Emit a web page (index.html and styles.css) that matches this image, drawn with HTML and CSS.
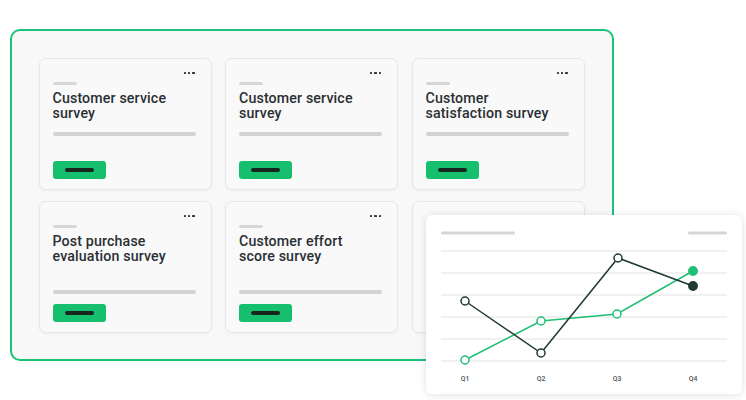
FILE: index.html
```html
<!DOCTYPE html>
<html>
<head>
<meta charset="utf-8">
<link rel="stylesheet" href="styles.css">
</head>
<body>
<div class="stage">
  <div class="frame">
    <div class="card">
      <div class="card-top"><span class="dots"><i></i><i></i><i></i></span></div>
      <div class="tag"></div>
      <div class="title">Customer service<br>survey</div>
      <div class="bar"></div>
      <div class="btn"><span></span></div>
    </div>
    <div class="card">
      <div class="card-top"><span class="dots"><i></i><i></i><i></i></span></div>
      <div class="tag"></div>
      <div class="title">Customer service<br>survey</div>
      <div class="bar"></div>
      <div class="btn"><span></span></div>
    </div>
    <div class="card">
      <div class="card-top"><span class="dots"><i></i><i></i><i></i></span></div>
      <div class="tag"></div>
      <div class="title">Customer<br>satisfaction survey</div>
      <div class="bar"></div>
      <div class="btn"><span></span></div>
    </div>
    <div class="card card--low">
      <div class="card-top"><span class="dots"><i></i><i></i><i></i></span></div>
      <div class="tag"></div>
      <div class="title">Post purchase<br>evaluation survey</div>
      <div class="bar"></div>
      <div class="btn"><span></span></div>
    </div>
    <div class="card card--low">
      <div class="card-top"><span class="dots"><i></i><i></i><i></i></span></div>
      <div class="tag"></div>
      <div class="title">Customer effort<br>score survey</div>
      <div class="bar"></div>
      <div class="btn"><span></span></div>
    </div>
    <div class="card card--low">
      <div class="card-top"><span class="dots"><i></i><i></i><i></i></span></div>
      <div class="tag"></div>
    </div>
  </div>

  <div class="chart">
    <svg width="316" height="179" viewBox="0 0 316 179">
      <rect x="15" y="16.5" width="74" height="3" rx="1.5" fill="#d6d6d6"/>
      <rect x="262" y="16.5" width="39" height="3" rx="1.5" fill="#d6d6d6"/>
      <g stroke="#e2e2e2" stroke-width="1">
        <line x1="15" y1="36" x2="301" y2="36"/>
        <line x1="15" y1="58" x2="301" y2="58"/>
        <line x1="15" y1="80" x2="301" y2="80"/>
        <line x1="15" y1="102" x2="301" y2="102"/>
        <line x1="15" y1="124" x2="301" y2="124"/>
        <line x1="15" y1="146" x2="301" y2="146"/>
      </g>
      <polyline points="39,145 115,106 191,99 267,56" fill="none" stroke="#1fbf74" stroke-width="1.5"/>
      <polyline points="39,86 115,138 192,43 267,71" fill="none" stroke="#1f3a2e" stroke-width="1.5"/>
      <g stroke-width="1.5">
        <circle cx="39" cy="145" r="4" fill="#fff" stroke="#1fbf74"/>
        <circle cx="115" cy="106" r="4" fill="#fff" stroke="#1fbf74"/>
        <circle cx="191" cy="99" r="4" fill="#fff" stroke="#1fbf74"/>
        <circle cx="267" cy="56" r="4.2" fill="#1fbf74" stroke="#1fbf74"/>
        <circle cx="39" cy="86" r="4" fill="#fff" stroke="#1f3a2e"/>
        <circle cx="115" cy="138" r="4" fill="#fff" stroke="#1f3a2e"/>
        <circle cx="192" cy="43" r="4" fill="#fff" stroke="#1f3a2e"/>
        <circle cx="267" cy="71" r="4.2" fill="#1f3a2e" stroke="#1f3a2e"/>
      </g>
      <g class="qlabel" text-anchor="middle">
        <text x="39" y="165.5">Q1</text>
        <text x="115" y="165.5">Q2</text>
        <text x="191" y="165.5">Q3</text>
        <text x="267" y="165.5">Q4</text>
      </g>
    </svg>
  </div>
</div>
</body>
</html>
```

FILE: styles.css
```css
* { box-sizing: border-box; }

html, body {
  margin: 0;
  padding: 0;
  background: #ffffff;
}

body {
  font-family: Roboto, "Liberation Sans", Arial, sans-serif;
  width: 746px;
  height: 400px;
  overflow: hidden;
}

.stage {
  position: relative;
  width: 746px;
  height: 400px;
  padding: 29px 0 0 10px;
}

.frame {
  width: 604px;
  height: 332px;
  border: 2.5px solid #19c37a;
  border-radius: 10px;
  background: #f8f8f8;
  padding: 26.5px 0 0 26.5px;
  display: grid;
  grid-template-columns: repeat(3, 173px);
  grid-template-rows: 132px 132px;
  column-gap: 13.5px;
  row-gap: 11px;
}

.card {
  background: #f9f9f9;
  border: 1px solid #e7e7e7;
  border-radius: 7px;
  box-shadow: 0 1px 3px rgba(0, 0, 0, 0.04);
  padding: 13px 13px 10px 13px;
  display: flex;
  flex-direction: column;
}

.card-top {
  display: flex;
  justify-content: flex-end;
  height: 3px;
  padding-right: 3px;
}

.dots {
  display: flex;
  gap: 2.2px;
}

.dots i {
  display: block;
  width: 2.2px;
  height: 2.2px;
  background: #34393d;
  border-radius: 0.5px;
}

.tag {
  width: 24px;
  height: 3px;
  border-radius: 2px;
  background: #d6d6d6;
  margin-top: 7px;
}

.title {
  margin-top: 6px;
  font-size: 14.2px;
  line-height: 15.5px;
  font-weight: 500;
  color: #2a2f33;
  white-space: nowrap;
  letter-spacing: 0.15px;
}

.bar {
  margin-top: 10px;
  height: 4px;
  width: 143px;
  border-radius: 2px;
  background: #d3d3d3;
}

.btn {
  margin-top: auto;
  width: 53px;
  height: 18px;
  border-radius: 3px;
  background: #15bf6e;
  display: flex;
  align-items: center;
  justify-content: center;
}

.btn span {
  display: block;
  width: 29px;
  height: 4px;
  border-radius: 2px;
  background: #17271f;
}

.card--low .bar {
  margin-top: auto;
}

.card--low .btn {
  margin-top: 10px;
}

.chart {
  position: absolute;
  left: 426px;
  top: 215px;
  width: 316px;
  height: 179px;
  background: #ffffff;
  border-radius: 6px;
  box-shadow: 0 1px 8px rgba(0, 0, 0, 0.13);
}

.chart svg {
  display: block;
}

.qlabel text {
  font-family: Roboto, "Liberation Sans", Arial, sans-serif;
  font-size: 6.8px;
  font-weight: 500;
  fill: #4a4f54;
}
```
